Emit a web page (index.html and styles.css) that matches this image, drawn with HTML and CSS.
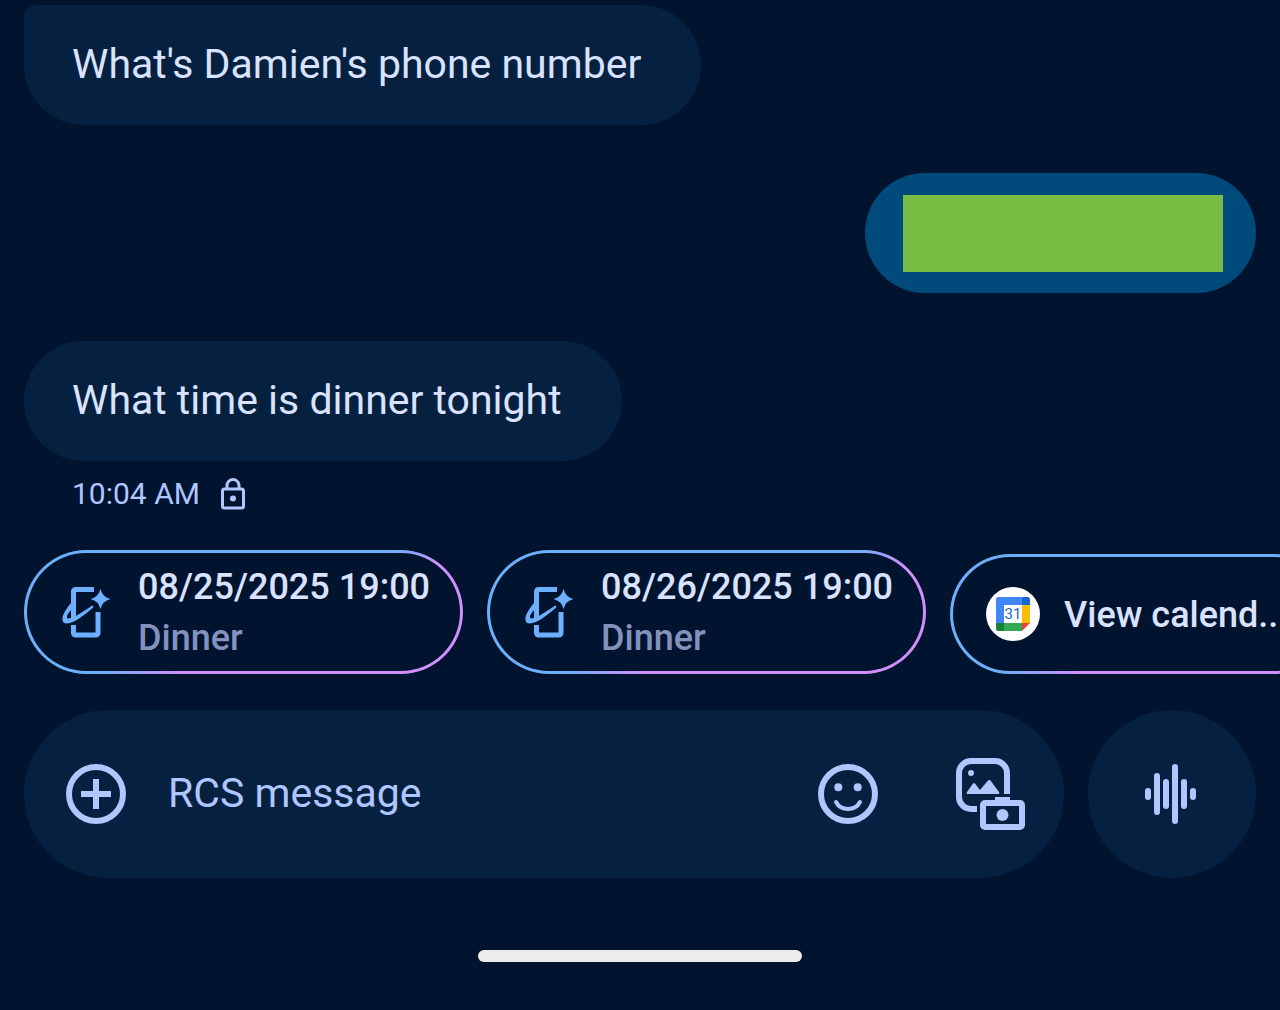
FILE: index.html
```html
<!DOCTYPE html>
<html lang="en">
<head>
    <meta charset="UTF-8">
    <meta name="viewport" content="width=device-width, initial-scale=1.0">
    <title>Messages</title>
    <link rel="stylesheet" href="styles.css">
</head>
<body>
    <main class="chat">
        <div class="messages">
            <p class="bubble in last">What's Damien's phone number</p>
            <div class="bubble out"><span class="redacted"></span></div>
            <p class="bubble in">What time is dinner tonight</p>
        </div>
        <div class="meta">
            <time>10:04 AM</time>
            <svg class="lock" width="26" height="34" viewBox="0 0 26 34" fill="none" stroke="currentColor" stroke-width="3">
                <rect x="2.500" y="12" width="21" height="19" rx="2"/>
                <path d="M7 12V8.500a6 6 0 0 1 12 0V12"/>
                <circle cx="13" cy="21.500" r="3" fill="currentColor" stroke="none"/>
            </svg>
        </div>

        <div class="chips">
            <button class="chip" type="button">
                <svg class="chip-icon" width="54" height="54" viewBox="-2 -1 54 54">
                    <path class="line" d="M32 3.500H13.500a2 2 0 0 0-2 2V32M11.500 39V47a2 2 0 0 0 2 2H34a2 2 0 0 0 2-2V26"/>
                    <path d="M29.500 20c1.500-.8 2.500 1 1.200 2C22 29 12 37.500 5 37.500C-3 37.500 0 27 9.500 16.500V23.500C5 28.500 3.500 32 6.500 32.500C12 32 22 25 29.500 20z"/>
                    <path d="M38.500 3Q40.500 11 48.500 13Q40.500 15 38.500 23Q36.500 15 28.500 13Q36.500 11 38.500 3z"/>
                </svg>
                <span class="chip-text">08/25/2025 19:00<small>Dinner</small></span>
            </button>
            <button class="chip" type="button">
                <svg class="chip-icon" width="54" height="54" viewBox="-2 -1 54 54">
                    <path class="line" d="M32 3.500H13.500a2 2 0 0 0-2 2V32M11.500 39V47a2 2 0 0 0 2 2H34a2 2 0 0 0 2-2V26"/>
                    <path d="M29.500 20c1.500-.8 2.500 1 1.200 2C22 29 12 37.500 5 37.500C-3 37.500 0 27 9.500 16.500V23.500C5 28.500 3.500 32 6.500 32.500C12 32 22 25 29.500 20z"/>
                    <path d="M38.500 3Q40.500 11 48.500 13Q40.500 15 38.500 23Q36.500 15 28.500 13Q36.500 11 38.500 3z"/>
                </svg>
                <span class="chip-text">08/26/2025 19:00<small>Dinner</small></span>
            </button>
            <button class="chip short" type="button">
                <svg class="chip-icon" width="54" height="54" viewBox="0 0 54 54">
                    <circle cx="27" cy="27" r="27" fill="#fff"/>
                    <path fill="#4285f4" d="M12.500 10H36v8H18v18h-8V12.500a2.500 2.500 0 0 1 2.500-2.500z"/>
                    <path fill="#1967d2" d="M36 10h5.500a2.500 2.500 0 0 1 2.500 2.500V18h-8z"/>
                    <path fill="#fbbc04" d="M36 18h8v18h-8z"/>
                    <path fill="#34a853" d="M18 36h18v8H18z"/>
                    <path fill="#188038" d="M10 36h8v8h-5.500a2.500 2.500 0 0 1-2.500-2.500z"/>
                    <path fill="#ea4335" d="M36 36h8l-8 8z"/>
                    <text class="day" x="27" y="32" text-anchor="middle">31</text>
                </svg>
                <span class="chip-text">View calend..</span>
            </button>
        </div>

        <form class="compose">
            <div class="field">
                <button class="icon-btn" type="button" aria-label="Add">
                    <svg width="60" height="60" viewBox="0 0 60 60" fill="none" stroke="currentColor" stroke-width="6">
                        <circle cx="30" cy="30" r="27"/>
                        <path d="M30 15v30M15 30h30"/>
                    </svg>
                </button>
                <input type="text" placeholder="RCS message" aria-label="RCS message">
                <button class="icon-btn" type="button" aria-label="Emoji">
                    <svg width="60" height="60" viewBox="0 0 60 60" fill="none" stroke="currentColor" stroke-width="6">
                        <circle cx="30" cy="30" r="27"/>
                        <g fill="currentColor" stroke="none">
                            <circle cx="20.300" cy="23.300" r="4"/>
                            <circle cx="39.700" cy="23.300" r="4"/>
                        </g>
                        <path stroke-width="4" stroke-linecap="round" d="M18 38c5 9.300 19 9.300 24 0"/>
                    </svg>
                </button>
                <button class="icon-btn gallery" type="button" aria-label="Gallery">
                    <svg width="69" height="72" viewBox="0 0 69 72" fill="none" stroke="currentColor" stroke-width="6">
                        <path d="M21 51H15A12 12 0 0 1 3 39V15A12 12 0 0 1 15 3H39A12 12 0 0 1 51 15V36"/>
                        <rect x="27" y="45" width="39" height="24" rx="2"/>
                        <g fill="currentColor" stroke="none">
                            <circle cx="15" cy="15" r="3"/>
                            <path d="M12 36q-2 0-1-2l6-8.500q1-1 2 0l5 6.500 8-9.500q1.500-1 2.500 0l8.500 11.500q1 2-1 2z"/>
                            <path d="M39 39h15v5H39z"/>
                            <circle cx="46.500" cy="57" r="6"/>
                        </g>
                    </svg>
                </button>
            </div>
            <button class="voice" type="button" aria-label="Voice message">
                <svg width="54" height="60" viewBox="0 0 54 60" stroke="currentColor" stroke-width="6" stroke-linecap="round">
                    <path d="M3 27v6M12 12v36M21 18v24M30 3v54M39 18v24M48 27v6"/>
                </svg>
            </button>
        </form>
        <div class="home-bar"></div>
    </main>
</body>
</html>
```
FILE: styles.css
```css
* {margin: 0;padding: 0;box-sizing: border-box;}
body {background: #00132f;color: #d9e2ff;font-family: Roboto, "Liberation Sans", sans-serif;overflow-x: hidden;}
button, input {font: inherit;color: inherit;background: none;border: 0;}
svg {display: block;flex: none;}

.chat {padding: 5px 24px 48px;overflow: hidden;}

.messages {display: flex;flex-direction: column;align-items: flex-start;gap: 48px;}
.bubble {height: 120px;display: flex;align-items: center;border-radius: 60px;}
.bubble.in {padding: 0 60px 2px 48px;background: #05213f;font-size: 41px;}
.bubble.last {border-top-left-radius: 12px;}
.bubble.out {align-self: flex-end;padding: 0 33px 0 38px;background: #004a7c;}
.redacted {width: 320px;height: 77px;background: #78bc43;}

.meta {display: flex;align-items: center;gap: 20px;height: 65px;padding-left: 48px;color: #b0c6ff;font-size: 30px;}

/* suggestions, the row runs off the right edge */
.chips {display: flex;align-items: flex-end;gap: 24px;margin: 24px -24px 36px 0;overflow: hidden;}
.chip {
    flex: none;
    display: flex;
    align-items: center;
    gap: 24px;
    width: 439px;
    height: 124px;
    padding: 0 33px;
    border: 3px solid transparent;
    border-radius: 62px;
    background: linear-gradient(#00132f, #00132f) padding-box, linear-gradient(157deg, #6cb0fa 50%, #d08ffb 61%) border-box;
    font-size: 36px;
    font-weight: 500;
    line-height: 51px;
    text-align: left;
    white-space: nowrap;
}
.chip.short {width: 384px;height: 120px;}
.chip-icon {fill: #6cb0ff;}
.chip-icon .line {fill: none;stroke: #6cb0ff;stroke-width: 5;}
.chip-text {padding-top: 2px;}
.chip small {display: block;font-size: 36px;color: #8392bd;}
.day {font-size: 15px;font-weight: 400;fill: #1967d2;}

.compose {display: flex;gap: 24px;color: #b0c6ff;}
.field {flex: 1;display: flex;align-items: center;height: 168px;padding: 0 39px 0 42px;border-radius: 84px;background: #05213f;}
.field input {flex: 1;min-width: 0;margin: 0 42px;padding-bottom: 2px;font-size: 41px;outline: none;}
.field input::placeholder {color: #b0c6ff;opacity: 1;}
.gallery {margin-left: 78px;}
.voice {display: grid;place-items: center;width: 168px;height: 168px;border-radius: 50%;background: #05213f;}

.home-bar {width: 324px;height: 12px;margin: 72px auto 0;border-radius: 6px;background: #ececee;}
```
